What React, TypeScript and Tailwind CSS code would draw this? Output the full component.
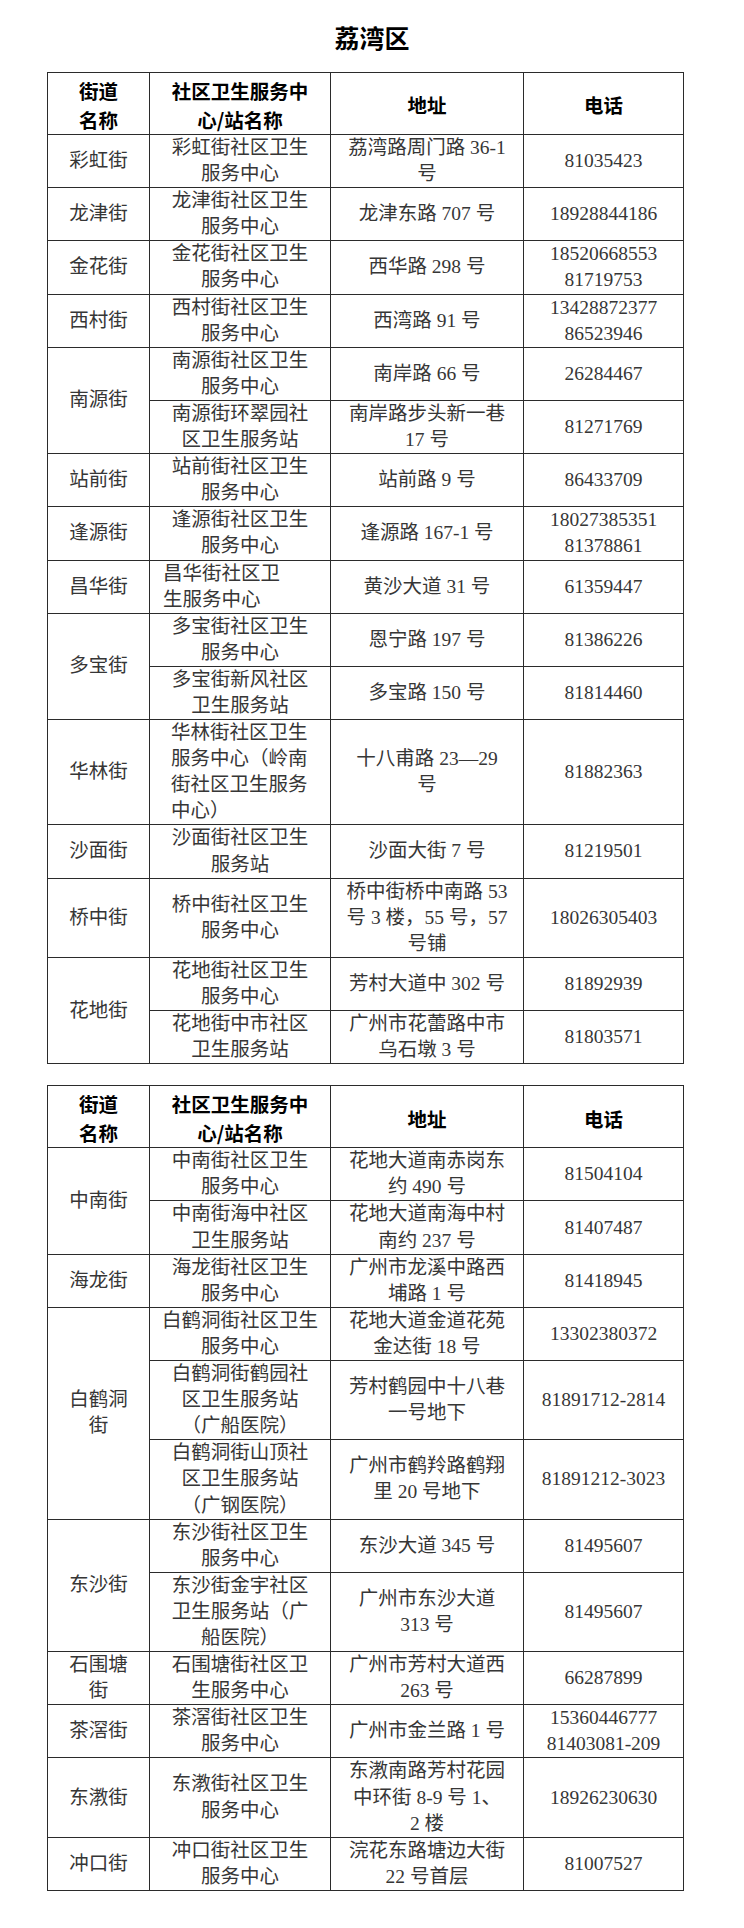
type Sub = { center: string; addr: string; phone: string; indent?: "sm" | "lg" };
type Group = { street: string; subs: Sub[] };

const tableOne: Group[] = [
  { street: "彩虹街", subs: [{ center: "彩虹街社区卫生\n服务中心", addr: "荔湾路周门路 36-1\n号", phone: "81035423" }] },
  { street: "龙津街", subs: [{ center: "龙津街社区卫生\n服务中心", addr: "龙津东路 707 号", phone: "18928844186" }] },
  { street: "金花街", subs: [{ center: "金花街社区卫生\n服务中心", addr: "西华路 298 号", phone: "18520668553\n81719753" }] },
  { street: "西村街", subs: [{ center: "西村街社区卫生\n服务中心", addr: "西湾路 91 号", phone: "13428872377\n86523946" }] },
  {
    street: "南源街",
    subs: [
      { center: "南源街社区卫生\n服务中心", addr: "南岸路 66 号", phone: "26284467" },
      { center: "南源街环翠园社\n区卫生服务站", addr: "南岸路步头新一巷\n17 号", phone: "81271769" },
    ],
  },
  { street: "站前街", subs: [{ center: "站前街社区卫生\n服务中心", addr: "站前路 9 号", phone: "86433709" }] },
  { street: "逢源街", subs: [{ center: "逢源街社区卫生\n服务中心", addr: "逢源路 167-1 号", phone: "18027385351\n81378861" }] },
  { street: "昌华街", subs: [{ center: "昌华街社区卫\n生服务中心", addr: "黄沙大道 31 号", phone: "61359447", indent: "sm" }] },
  {
    street: "多宝街",
    subs: [
      { center: "多宝街社区卫生\n服务中心", addr: "恩宁路 197 号", phone: "81386226" },
      { center: "多宝街新风社区\n卫生服务站", addr: "多宝路 150 号", phone: "81814460" },
    ],
  },
  {
    street: "华林街",
    subs: [
      {
        center: "华林街社区卫生\n服务中心（岭南\n街社区卫生服务\n中心）",
        addr: "十八甫路 23—29\n号",
        phone: "81882363",
        indent: "lg",
      },
    ],
  },
  { street: "沙面街", subs: [{ center: "沙面街社区卫生\n服务站", addr: "沙面大街 7 号", phone: "81219501" }] },
  {
    street: "桥中街",
    subs: [{ center: "桥中街社区卫生\n服务中心", addr: "桥中街桥中南路 53\n号 3 楼，55 号，57\n号铺", phone: "18026305403" }],
  },
  {
    street: "花地街",
    subs: [
      { center: "花地街社区卫生\n服务中心", addr: "芳村大道中 302 号", phone: "81892939" },
      { center: "花地街中市社区\n卫生服务站", addr: "广州市花蕾路中市\n乌石墩 3 号", phone: "81803571" },
    ],
  },
];

const tableTwo: Group[] = [
  {
    street: "中南街",
    subs: [
      { center: "中南街社区卫生\n服务中心", addr: "花地大道南赤岗东\n约 490 号", phone: "81504104" },
      { center: "中南街海中社区\n卫生服务站", addr: "花地大道南海中村\n南约 237 号", phone: "81407487" },
    ],
  },
  { street: "海龙街", subs: [{ center: "海龙街社区卫生\n服务中心", addr: "广州市龙溪中路西\n埔路 1 号", phone: "81418945" }] },
  {
    street: "白鹤洞\n街",
    subs: [
      { center: "白鹤洞街社区卫生\n服务中心", addr: "花地大道金道花苑\n金达街 18 号", phone: "13302380372" },
      { center: "白鹤洞街鹤园社\n区卫生服务站\n（广船医院）", addr: "芳村鹤园中十八巷\n一号地下", phone: "81891712-2814" },
      { center: "白鹤洞街山顶社\n区卫生服务站\n（广钢医院）", addr: "广州市鹤羚路鹤翔\n里 20 号地下", phone: "81891212-3023" },
    ],
  },
  {
    street: "东沙街",
    subs: [
      { center: "东沙街社区卫生\n服务中心", addr: "东沙大道 345 号", phone: "81495607" },
      { center: "东沙街金宇社区\n卫生服务站（广\n船医院）", addr: "广州市东沙大道\n313 号", phone: "81495607" },
    ],
  },
  { street: "石围塘\n街", subs: [{ center: "石围塘街社区卫\n生服务中心", addr: "广州市芳村大道西\n263 号", phone: "66287899" }] },
  {
    street: "茶滘街",
    subs: [{ center: "茶滘街社区卫生\n服务中心", addr: "广州市金兰路 1 号", phone: "15360446777\n81403081-209" }],
  },
  {
    street: "东漖街",
    subs: [{ center: "东漖街社区卫生\n服务中心", addr: "东漖南路芳村花园\n中环街 8-9 号 1、\n2 楼", phone: "18926230630" }],
  },
  { street: "冲口街", subs: [{ center: "冲口街社区卫生\n服务中心", addr: "浣花东路塘边大街\n22 号首层", phone: "81007527" }] },
];

function Lines({ text }: { text: string }) {
  return (
    <>
      {text.split("\n").map((line, i) => (
        <div key={i} className="whitespace-nowrap">
          {line}
        </div>
      ))}
    </>
  );
}

const cell = "border border-[#2b2b2b] p-0 text-center align-middle";

// two cells in the source doc are left aligned instead of centred
function centerCell(indent?: "sm" | "lg") {
  if (indent === "sm") return `${cell} pl-[13px] !text-left`;
  if (indent === "lg") return `${cell} pl-[21px] !text-left`;
  return cell;
}

function ClinicTable({ groups }: { groups: Group[] }) {
  return (
    <table className="w-[636px] table-fixed border-collapse">
      <colgroup>
        <col className="w-[102px]" />
        <col className="w-[181px]" />
        <col className="w-[193px]" />
        <col className="w-[160px]" />
      </colgroup>
      <thead>
        <tr className="font-['Noto_Sans_CJK_SC',sans-serif] text-[19.5px] font-bold leading-[28.5px] text-black">
          <th className={`${cell} pt-[4px] font-bold`}>
            <Lines text={"街道\n名称"} />
          </th>
          <th className={`${cell} pt-[4px] font-bold`}>
            <Lines text={"社区卫生服务中\n心/站名称"} />
          </th>
          <th className={`${cell} pt-[4px] font-bold`}>地址</th>
          <th className={`${cell} pt-[4px] font-bold`}>电话</th>
        </tr>
      </thead>
      <tbody className="text-[19.5px] leading-[26.1px] text-[#363636]">
        {groups.map((g) =>
          g.subs.map((s, i) => (
            <tr key={g.street + i}>
              {i === 0 && (
                <td rowSpan={g.subs.length} className={cell}>
                  <Lines text={g.street} />
                </td>
              )}
              <td className={centerCell(s.indent)}>
                <Lines text={s.center} />
              </td>
              <td className={cell}>
                <Lines text={s.addr} />
              </td>
              <td className={cell}>
                <Lines text={s.phone} />
              </td>
            </tr>
          )),
        )}
      </tbody>
    </table>
  );
}

export default function App() {
  return (
    <main className="min-h-[1928px] w-[744px] bg-white font-['Liberation_Serif','Noto_Sans_CJK_SC',serif]">
      <h1 className="pt-[22px] text-center font-['Noto_Sans_CJK_SC',sans-serif] text-[25px] font-bold leading-[30px] text-black">
        荔湾区
      </h1>
      <div className="mt-[20px] flex flex-col gap-[21px] pl-[47px]">
        <ClinicTable groups={tableOne} />
        <ClinicTable groups={tableTwo} />
      </div>
    </main>
  );
}
